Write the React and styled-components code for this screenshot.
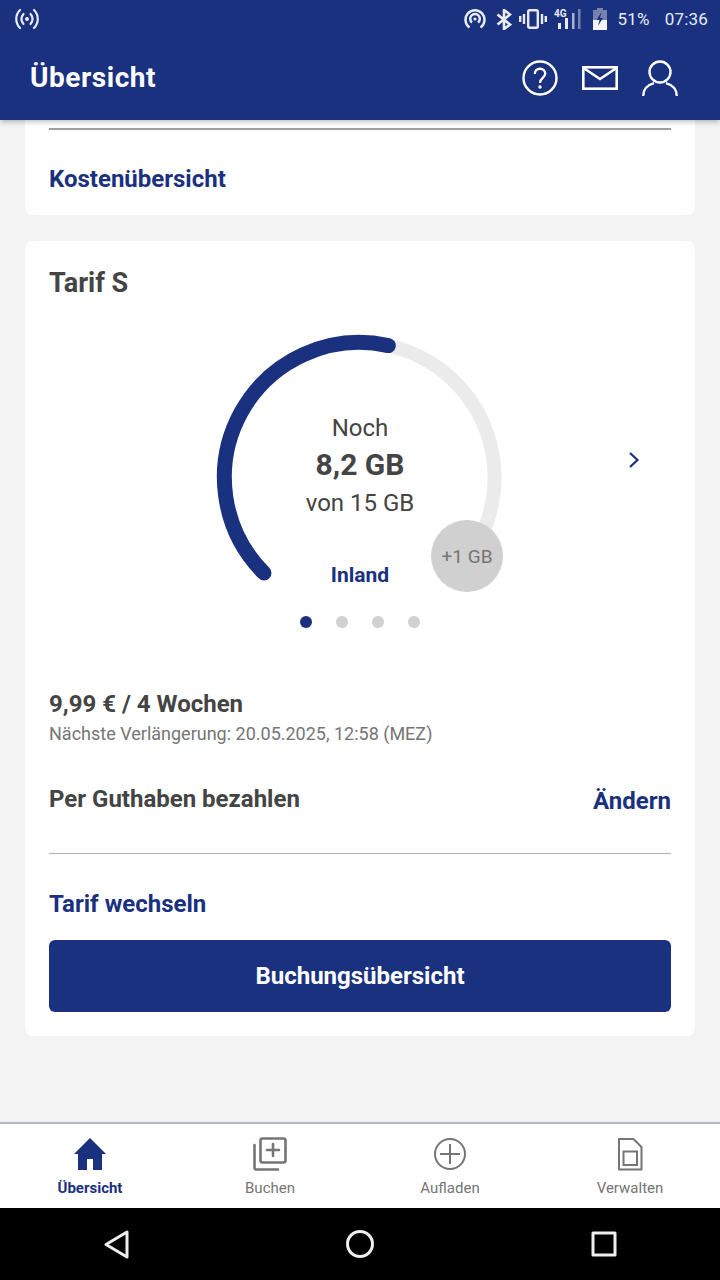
import React from "react";
import styled, { createGlobalStyle } from "styled-components";

const BLUE = "#1a3180";
const TEXT = "#444444";
const GREY = "#757575";
const STATUS = "#e8ebf4";

const GlobalStyle = createGlobalStyle`
  html, body {
    margin: 0;
    padding: 0;
    background: #f3f3f3;
  }
  * {
    box-sizing: border-box;
  }
`;

const Screen = styled.div`
  width: 720px;
  height: 1280px;
  display: flex;
  flex-direction: column;
  overflow: hidden;
  font-family: Roboto, "Liberation Sans", sans-serif;
  color: ${TEXT};
`;

const AppBar = styled.header`
  position: relative;
  z-index: 2;
  flex: none;
  height: 120px;
  background: ${BLUE};
  box-shadow: 0 2px 5px rgba(0, 0, 0, 0.25);
  color: #fff;
`;

const StatusBar = styled.div`
  height: 38px;
  padding: 0 12px 0 13px;
  display: flex;
  align-items: center;
  justify-content: space-between;
`;

const StatusGroup = styled.div`
  display: flex;
  align-items: center;
`;

const StatusText = styled.span`
  font-size: 17px;
  letter-spacing: 0.2px;
  color: ${STATUS};
  margin-left: ${(p) => p.$gap}px;
`;

const StatusIcon = styled.svg`
  display: block;
  margin-left: ${(p) => p.$gap || 0}px;
`;

const TitleRow = styled.div`
  height: 79px;
  padding: 0 42px 0 30px;
  display: flex;
  align-items: center;
  justify-content: space-between;
`;

const Title = styled.h1`
  margin: 0;
  font-size: 28px;
  font-weight: 700;
  letter-spacing: 0.55px;
`;

const Actions = styled.div`
  display: flex;
  align-items: center;
  gap: 24px;
`;

const Content = styled.main`
  flex: 1;
  padding: 0 25px;
  background: #f3f3f3;
`;

const Card = styled.section`
  background: #fff;
  border-radius: 0 0 8px 8px;
  padding: 8px 24px 0;
  height: 95px;
`;

const TariffCard = styled(Card)`
  margin-top: 26px;
  height: 795px;
  border-radius: 8px;
  padding: 25px 24px 24px;
`;

const Divider = styled.hr`
  margin: 0;
  border: none;
  height: ${(p) => p.$h || 1}px;
  background: ${(p) => p.$color || "#a8a8a8"};
`;

const LinkText = styled.div`
  color: ${BLUE};
  font-size: 24px;
  font-weight: 700;
  line-height: 30px;
`;

const CostLink = styled(LinkText)`
  margin-top: 34px;
`;

const CardTitle = styled.h2`
  margin: 0;
  font-size: 27px;
  font-weight: 700;
  line-height: 34px;
  color: ${TEXT};
`;

const GaugeRow = styled.div`
  position: relative;
  height: 268px;
  margin-top: 34px;
  display: flex;
  justify-content: center;
`;

const GaugeSvg = styled.svg`
  display: block;
  overflow: visible;
`;

const GaugeCenter = styled.div`
  position: absolute;
  left: 0;
  right: 0;
  top: 76px;
  text-align: center;
`;

const GaugeLine = styled.div`
  font-size: ${(p) => p.$size}px;
  font-weight: ${(p) => p.$weight || 400};
  line-height: ${(p) => p.$line}px;
  color: ${TEXT};
`;

const GaugeLabel = styled.div`
  position: absolute;
  left: 0;
  right: 0;
  top: 227px;
  text-align: center;
  color: ${BLUE};
  font-size: 21px;
  font-weight: 700;
  line-height: 28px;
`;

const TopUp = styled.div`
  position: absolute;
  left: 382px;
  top: 186px;
  width: 72px;
  height: 72px;
  border-radius: 50%;
  background: #d0d0d0;
  color: #757575;
  font-size: 19px;
  display: flex;
  align-items: center;
  justify-content: center;
`;

const Chevron = styled.svg`
  position: absolute;
  left: 579px;
  top: 117px;
`;

const Dots = styled.div`
  display: flex;
  justify-content: center;
  gap: 24px;
  margin-top: 14px;
`;

const Dot = styled.span`
  width: 12px;
  height: 12px;
  border-radius: 50%;
  background: ${(p) => (p.$active ? BLUE : "#d0d0d0")};
`;

const Price = styled.div`
  margin-top: 60px;
  font-size: 24px;
  font-weight: 700;
  line-height: 32px;
`;

const Renewal = styled.div`
  font-size: 18px;
  line-height: 26px;
  color: ${GREY};
  margin-top: 1px;
`;

const PaymentRow = styled.div`
  display: flex;
  justify-content: space-between;
  align-items: flex-start;
  margin-top: 37px;
  height: 69px;
`;

const PaymentLabel = styled.div`
  font-size: 24px;
  font-weight: 700;
  line-height: 30px;
`;

const ChangeLink = styled(LinkText)`
  margin-top: 2px;
`;

const SwitchLink = styled(LinkText)`
  margin-top: 35px;
`;

const Primary = styled.button`
  display: block;
  width: 100%;
  height: 72px;
  margin-top: 21px;
  border: none;
  border-radius: 6px;
  background: ${BLUE};
  color: #fff;
  font-family: inherit;
  font-size: 24px;
  font-weight: 700;
`;

const BottomNav = styled.nav`
  flex: none;
  height: 86px;
  display: grid;
  grid-template-columns: repeat(4, 1fr);
  background: #fff;
  border-top: 2px solid #b0b8c8;
`;

const NavItem = styled.div`
  display: flex;
  flex-direction: column;
  align-items: center;
  padding-top: 13px;
  color: ${(p) => (p.$active ? BLUE : GREY)};
  font-size: 15px;
  font-weight: ${(p) => (p.$active ? 700 : 400)};
`;

const NavIcon = styled.svg`
  display: block;
  margin-bottom: 8px;
`;

const NavLabel = styled.span`
  line-height: 18px;
`;

const SystemBar = styled.div`
  flex: none;
  width: 732px;
  margin-left: -6px;
  height: 72px;
  background: #000;
  display: grid;
  grid-template-columns: repeat(3, 1fr);
`;

const SystemButton = styled.div`
  display: flex;
  align-items: center;
  justify-content: center;
`;

const polar = (deg, r = 135) => {
  const rad = (deg * Math.PI) / 180;
  return [199.5 + r * Math.sin(rad), 143.5 - r * Math.cos(rad)];
};

const arc = (from, to) => {
  const [x1, y1] = polar(from);
  const [x2, y2] = polar(to);
  const large = to - from > 180 ? 1 : 0;
  return `M${x1.toFixed(1)} ${y1.toFixed(1)}A135 135 0 ${large} 1 ${x2.toFixed(1)} ${y2.toFixed(1)}`;
};

const navItems = [
  {
    label: "Übersicht",
    active: true,
    icon: <path fill={BLUE} d="M17 1 1 17h4v16h9V22h6v11h9V17h4z" />,
  },
  {
    label: "Buchen",
    icon: (
      <g fill="none" stroke={GREY} strokeWidth="2.6" strokeLinejoin="round" strokeLinecap="round">
        <rect x="7.5" y="1.5" width="25" height="24" rx="2" />
        <path d="M20 7v12M14 13h12" />
        <path d="M1.5 8v22.5a2 2 0 0 0 2 2H25" />
      </g>
    ),
  },
  {
    label: "Aufladen",
    icon: (
      <g fill="none" stroke={GREY} strokeWidth="2">
        <circle cx="17" cy="17" r="15" />
        <path d="M17 7v20M7 17h20" />
      </g>
    ),
  },
  {
    label: "Verwalten",
    icon: (
      <g fill="none" stroke={GREY} strokeWidth="2">
        <path d="M6 2h14.500l8 8v22.500H6z" strokeLinejoin="round" />
        <rect x="10.500" y="14.500" width="13.500" height="13.500" />
      </g>
    ),
  },
];

const StatusIcons = () => (
  <StatusGroup>
    <StatusIcon width="22" height="20" viewBox="0 0 22 20" fill="none" stroke={STATUS} strokeWidth="2.500">
      <path d="M5.500 18.500a9.500 9.500 0 1 1 11 0" />
      <path d="M8 13.500a4.800 4.800 0 1 1 6 0" />
      <circle cx="11" cy="10" r="1.600" fill={STATUS} stroke="none" />
    </StatusIcon>
    <StatusIcon $gap={10} width="16" height="21" viewBox="0 0 16 21" fill="none" stroke={STATUS} strokeWidth="2.600">
      <path d="M1.500 5.500 14 15.500l-6 4.500V1l6 4.500L1.500 15.500" />
    </StatusIcon>
    <StatusIcon $gap={7} width="28" height="20" viewBox="0 0 28 20" fill="none" stroke={STATUS} strokeWidth="2.400">
      <rect x="9.200" y="1.200" width="9.600" height="17.600" rx="1.500" />
      <path d="M5 5v10M1.200 7v6M23 5v10M26.800 7v6" />
    </StatusIcon>
    <StatusIcon $gap={7} width="28" height="22" viewBox="0 0 28 22">
      <text x="0" y="9" fontSize="10" fontWeight="700" fill={STATUS} fontFamily="Roboto, sans-serif">4G</text>
      <rect x="4" y="15" width="3" height="6" fill={STATUS} />
      <rect x="11" y="10" width="3" height="11" fill={STATUS} />
      <rect x="18" y="5" width="2.500" height="16" fill="#aab3cf" />
      <rect x="24" y="1" width="2.500" height="20" fill="#7783ad" />
    </StatusIcon>
    <StatusIcon $gap={11} width="14" height="22" viewBox="0 0 14 22">
      <path d="M4 0h6v2h4v20H0V2h4z" fill="#7783ad" />
      <path d="M0 22V12h14v10z" fill="#f4f5f9" />
      <path d="M8.500 4 3.500 12h3l-1.500 6 5-8H7z" fill={BLUE} />
    </StatusIcon>
    <StatusText $gap={10}>51%</StatusText>
    <StatusText $gap={15}>07:36</StatusText>
  </StatusGroup>
);

export default function App() {
  return (
    <Screen>
      <GlobalStyle />
      <AppBar>
        <StatusBar>
          <StatusIcon width="28" height="22" viewBox="0 0 28 22" fill="none" stroke={STATUS} strokeWidth="2.200" strokeLinecap="round">
            <path d="M7 2c-5 5-5 13 0 18M21 2c5 5 5 13 0 18" />
            <path d="M10.500 6c-2.500 3-2.500 7 0 10M17.500 6c2.500 3 2.500 7 0 10" />
            <circle cx="14" cy="11" r="2" fill={STATUS} stroke="none" />
          </StatusIcon>
          <StatusIcons />
        </StatusBar>
        <TitleRow>
          <Title>Übersicht</Title>
          <Actions>
            <svg width="36" height="36" viewBox="0 0 36 36" fill="none" stroke="#fff" strokeWidth="2.400">
              <circle cx="18" cy="18" r="16.500" />
              <path d="M12.800 14c0-3.200 2.300-5.200 5.200-5.200s5.200 2 5.200 4.800c0 4.400-5.200 4.400-5.200 9.400" />
              <circle cx="18" cy="27" r="1.700" fill="#fff" stroke="none" />
            </svg>
            <svg width="36" height="24" viewBox="0 0 36 24" fill="none" stroke="#fff" strokeWidth="2.600">
              <rect x="1.300" y="1.300" width="33.400" height="21.400" />
              <path d="M1.500 2 18 13 34.500 2" />
            </svg>
            <svg width="36" height="36" viewBox="0 0 36 36" fill="none" stroke="#fff" strokeWidth="2.400">
              <circle cx="18" cy="12" r="10.500" />
              <path d="M1.200 36c0-7 4.500-11 10.800-12.800M34.800 36c0-7-4.500-11-10.800-12.800" />
            </svg>
          </Actions>
        </TitleRow>
      </AppBar>
      <Content>
        <Card>
          <Divider $h={2} $color="#a0a0a0" />
          <CostLink>Kostenübersicht</CostLink>
        </Card>
        <TariffCard>
          <CardTitle>Tarif S</CardTitle>
          <GaugeRow>
            <GaugeSvg width="400" height="268" viewBox="0 0 400 268" fill="none" strokeLinecap="round">
              <path d={arc(12, 135)} stroke="#ebebeb" strokeWidth="14" />
              <path d={arc(-135, 12.300)} stroke={BLUE} strokeWidth="15" />
            </GaugeSvg>
            <GaugeCenter>
              <GaugeLine $size={24} $line={36}>Noch</GaugeLine>
              <GaugeLine $size={30} $weight={700} $line={37}>8,2 GB</GaugeLine>
              <GaugeLine $size={24} $line={40}>von 15 GB</GaugeLine>
            </GaugeCenter>
            <GaugeLabel>Inland</GaugeLabel>
            <TopUp>+1 GB</TopUp>
            <Chevron width="12" height="18" viewBox="0 0 12 18" fill="none" stroke={BLUE} strokeWidth="2.200">
              <path d="M2 2l7.500 7L2 16" />
            </Chevron>
          </GaugeRow>
          <Dots>
            <Dot $active />
            <Dot />
            <Dot />
            <Dot />
          </Dots>
          <Price>9,99 € / 4 Wochen</Price>
          <Renewal>Nächste Verlängerung: 20.05.2025, 12:58 (MEZ)</Renewal>
          <PaymentRow>
            <PaymentLabel>Per Guthaben bezahlen</PaymentLabel>
            <ChangeLink>Ändern</ChangeLink>
          </PaymentRow>
          <Divider $color="#b0b0b0" />
          <SwitchLink>Tarif wechseln</SwitchLink>
          <Primary>Buchungsübersicht</Primary>
        </TariffCard>
      </Content>
      <BottomNav>
        {navItems.map((item) => (
          <NavItem key={item.label} $active={item.active}>
            <NavIcon width="34" height="34" viewBox="0 0 34 34">
              {item.icon}
            </NavIcon>
            <NavLabel>{item.label}</NavLabel>
          </NavItem>
        ))}
      </BottomNav>
      <SystemBar>
        <SystemButton>
          <svg width="25" height="29" viewBox="0 0 25 29" fill="none" stroke="#eee" strokeWidth="3" strokeLinejoin="round">
            <path d="M23 2v25L2 14.500z" />
          </svg>
        </SystemButton>
        <SystemButton>
          <svg width="30" height="30" viewBox="0 0 30 30" fill="none" stroke="#eee" strokeWidth="3">
            <circle cx="15" cy="15" r="12.500" />
          </svg>
        </SystemButton>
        <SystemButton>
          <svg width="26" height="26" viewBox="0 0 26 26" fill="none" stroke="#eee" strokeWidth="3" strokeLinejoin="round">
            <rect x="2" y="2" width="22" height="22" />
          </svg>
        </SystemButton>
      </SystemBar>
    </Screen>
  );
}
